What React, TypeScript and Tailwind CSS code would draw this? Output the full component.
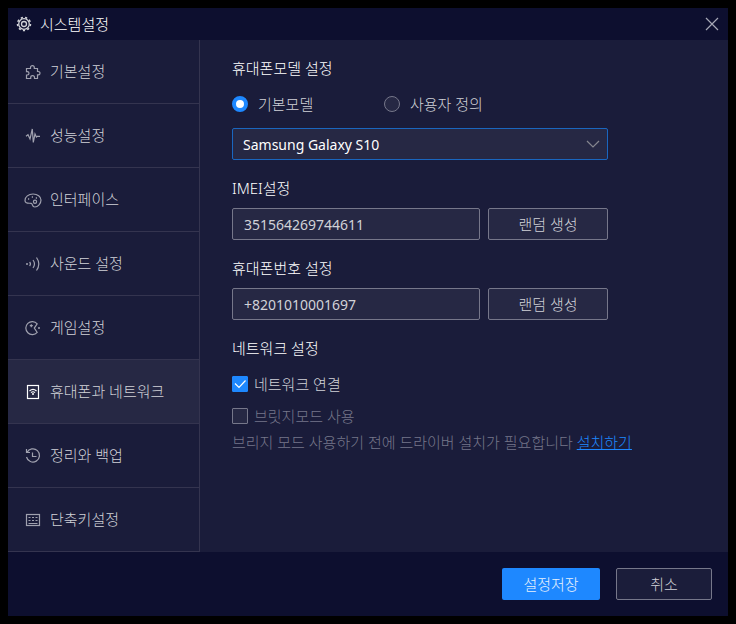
import { useState, ReactNode } from 'react';

interface MenuItem {
    id: string;
    label: string;
    icon: ReactNode;
}

// Sidebar icons share an 18x18 box
const MENU: MenuItem[] = [
    {
        id: 'basic',
        label: '기본설정',
        icon: <path d="M2.5 5.500H6.500V4.500a1.900 1.900 0 0 1 3.800 0V5.500H13.500V8.500h.8a1.700 1.700 0 0 1 0 3.400h-.8V15.500H10.500V14.500a1.900 1.900 0 0 0-3.800 0V15.500H2.500V12h.8a1.700 1.700 0 0 0 0-3.400h-.8z" />,
    },
    {
        id: 'performance',
        label: '성능설정',
        icon: <path d="M2 9.3L4 7.7 6 12 8.3 2 9.3 15.5 11 7l1.4 3 1-.7H16" />,
    },
    {
        id: 'interface',
        label: '인터페이스',
        icon: (
            <>
                <path d="M9 3c4.5 0 8 2.6 8 6.1 0 3.6-3 6.9-6.2 6.9-3.2 0-1.6-3.2-3.6-3.6C5 12 1 13 1 9.4 1 5.8 4.5 3 9 3z" />
                <circle cx="11" cy="10.8" r="1.6" />
                <path d="M4 8h1.2M7.8 6H9M11.8 7H13" strokeWidth="1.4" />
            </>
        ),
    },
    {
        id: 'sound',
        label: '사운드 설정',
        icon: (
            <>
                <circle cx="3" cy="9" r="1" fill="currentColor" stroke="none" />
                <path d="M5.6 7q1.8 2 0 4M9 5q3 4 0 8M12.5 2.5q4.6 6.500 0 13" />
            </>
        ),
    },
    {
        id: 'game',
        label: '게임설정',
        icon: (
            <>
                <path d="M13.200 4.800A6.500 6.500 0 1 0 13.200 13.400L10.300 9.100z" />
                <path d="M7.300 5.200v3M5.800 6.700h3" />
                <circle cx="15" cy="9" r="1" fill="currentColor" stroke="none" />
            </>
        ),
    },
    {
        id: 'network',
        label: '휴대폰과 네트워크',
        icon: (
            <>
                <rect x="3.500" y="2.500" width="11" height="13" />
                <path d="M5.500 8q3.500-3.200 7 0M7 9.600q2-1.700 4 0" />
                <circle cx="9" cy="11" r="1" fill="currentColor" stroke="none" />
            </>
        ),
    },
    {
        id: 'backup',
        label: '정리와 백업',
        icon: (
            <>
                <path d="M2.500 2v3.500H6M3 5.500A6.600 6.600 0 1 1 2.500 10" />
                <path d="M8.500 5.500v4h4" />
            </>
        ),
    },
    {
        id: 'shortcut',
        label: '단축키설정',
        icon: (
            <>
                <rect x="2.500" y="3.500" width="13" height="11" />
                <path d="M4.500 6.500h2M8 6.500h2M11.500 6.500h2M4.500 9.500h2M8 9.500h2M11.500 9.500h2M4.500 12.500h9" />
            </>
        ),
    },
];

const FIELD = 'rounded-xs border border-[#76778a] bg-[#262844] text-[#d1d2d8]';

const Heading = ({ children }: { children: ReactNode }) => (
    <h2 className="text-[15px] leading-6 text-white">{children}</h2>
);

interface RandomFieldProps {
    id: string;
    label: string;
    value: string;
    onChange: (value: string) => void;
    onRandom: () => void;
}

const RandomField = ({ id, label, value, onChange, onRandom }: RandomFieldProps) => (
    <section className="mt-4">
        <Heading><label htmlFor={id}>{label}</label></Heading>
        <div className="mt-2 flex max-w-[376px] gap-2">
            <input
                id={id}
                value={value}
                onChange={e => onChange(e.target.value)}
                className={`${FIELD} h-8 min-w-0 flex-1 px-[11px] text-[14px] font-normal outline-none`}
            />
            <button onClick={onRandom} className={`${FIELD} h-8 w-[120px] text-[15px]`}>랜덤 생성</button>
        </div>
    </section>
);

interface CheckRowProps {
    label: string;
    checked: boolean;
    disabled?: boolean;
    onChange: (checked: boolean) => void;
}

const CheckRow = ({ label, checked, disabled, onChange }: CheckRowProps) => (
    <label className={`flex items-center gap-1.5 text-[15px] leading-6 ${disabled ? 'text-[#76778a]' : 'text-[#d1d2d8]'}`}>
        <span className="relative size-4">
            <input
                type="checkbox"
                checked={checked}
                disabled={disabled}
                onChange={e => onChange(e.target.checked)}
                className="block size-4 appearance-none rounded-[1px] border border-[#76778a] bg-[#262844] checked:border-[#1e88ff] checked:bg-[#1e88ff]"
            />
            {checked && (
                <svg viewBox="0 0 16 16" className="pointer-events-none absolute inset-0 size-4" fill="none" stroke="#fff" strokeWidth="1.2">
                    <path d="M3 7.500l4 4 6.500-7" />
                </svg>
            )}
        </span>
        {label}
    </label>
);

const randomDigits = (count: number) =>
    Array.from({ length: count }, () => Math.floor(Math.random() * 10)).join('');

const App = () => {
    const [active, setActive] = useState('network');
    const [modelType, setModelType] = useState<'default' | 'custom'>('default');
    const [imei, setImei] = useState('351564269744611');
    const [phone, setPhone] = useState('+8201010001697');
    const [connected, setConnected] = useState(true);
    const [bridge, setBridge] = useState(false);

    const radioClass = 'size-4 appearance-none rounded-full border border-[#76778a] bg-[#262844] checked:border-4 checked:border-[#1e88ff] checked:bg-white';

    return (
        <div className="flex min-h-screen flex-col bg-black p-2 font-['Noto_Sans','Noto_Sans_CJK_KR',sans-serif] font-light">
            <header className="flex h-8 items-center gap-2 bg-[#0d0f2f] px-2 text-white">
                <svg viewBox="0 0 16 16" className="size-4" fill="none" stroke="#d1d2d8">
                    <circle cx="8" cy="8" r="5.300" strokeWidth="1.300" />
                    <circle cx="8" cy="8" r="6.500" strokeWidth="1.500" pathLength="18" strokeDasharray="1 1" />
                    <circle cx="8" cy="8" r="2.500" strokeWidth="1.300" />
                </svg>
                <h1 className="flex-1 text-[15px] leading-6">시스템설정</h1>
                <button aria-label="닫기">
                    <svg viewBox="0 0 16 16" className="size-4" stroke="#a6a7b5" strokeWidth="1.2">
                        <path d="M2 2l12 12M14 2L2 14" />
                    </svg>
                </button>
            </header>

            <div className="flex flex-1 bg-[#1a1c3a]">
                <nav className="w-48 shrink-0 border-r border-[#34344f]">
                    {MENU.map(item => {
                        const selected = item.id === active;
                        return (
                            <button
                                key={item.id}
                                onClick={() => setActive(item.id)}
                                className={`flex h-16 w-full items-center gap-2 border-b border-[#34344f] pl-4 text-left text-[15px] text-[#d1d2d8] ${selected ? 'bg-[#262844]' : ''}`}
                            >
                                <svg
                                    viewBox="0 0 18 18"
                                    className={`size-[18px] ${selected ? 'text-white' : 'text-[#a0a1af]'}`}
                                    fill="none"
                                    stroke="currentColor"
                                    strokeWidth="1.200"
                                >
                                    {item.icon}
                                </svg>
                                {item.label}
                            </button>
                        );
                    })}
                </nav>

                <main className="min-w-0 flex-1 px-8 pt-4">
                    <Heading>휴대폰모델 설정</Heading>
                    <div className="mt-3 flex text-[15px] leading-6 text-[#d1d2d8]">
                        <label className="flex w-[152px] items-center gap-2.5">
                            <input type="radio" name="model" className={radioClass} checked={modelType === 'default'} onChange={() => setModelType('default')} />
                            기본모델
                        </label>
                        <label className="flex items-center gap-2.5">
                            <input type="radio" name="model" className={radioClass} checked={modelType === 'custom'} onChange={() => setModelType('custom')} />
                            사용자 정의
                        </label>
                    </div>
                    <div className="relative mt-3 max-w-[376px]">
                        <select
                            aria-label="휴대폰모델"
                            className="block h-8 w-full appearance-none rounded-xs border border-[#1a66bf] bg-[#262844] px-2.5 text-[14px] font-normal text-white outline-none"
                        >
                            <option>Samsung Galaxy S10</option>
                        </select>
                        <svg viewBox="0 0 14 8" className="pointer-events-none absolute top-3 right-2 h-2 w-3.5" fill="none" stroke="#85868f" strokeWidth="1.2">
                            <path d="M1 1l6 6 6-6" />
                        </svg>
                    </div>

                    <RandomField id="imei" label="IMEI설정" value={imei} onChange={setImei} onRandom={() => setImei(randomDigits(15))} />
                    <RandomField id="phone" label="휴대폰번호 설정" value={phone} onChange={setPhone} onRandom={() => setPhone('+82010' + randomDigits(8))} />

                    <section className="mt-4">
                        <Heading>네트워크 설정</Heading>
                        <div className="mt-3 flex flex-col gap-2">
                            <CheckRow label="네트워크 연결" checked={connected} onChange={setConnected} />
                            <CheckRow label="브릿지모드 사용" checked={bridge} disabled onChange={setBridge} />
                        </div>
                        <p className="mt-0.5 text-[15px] leading-6 text-[#76778a]">
                            브리지 모드 사용하기 전에 드라이버 설치가 필요합니다{' '}
                            <a href="#install" className="text-[#1e88ff] underline">설치하기</a>
                        </p>
                    </section>
                </main>
            </div>

            <footer className="flex h-16 items-center justify-end gap-4 bg-[#0d0f2f] px-4 text-[15px]">
                <button className="h-8 w-[98px] rounded-xs bg-[#1e88ff] text-[#e8f1fc]">설정저장</button>
                <button className="h-8 w-24 rounded-xs border border-[#76778a] bg-[#1b1d3a] text-[#d1d2d8]">취소</button>
            </footer>
        </div>
    );
};

export default App;
